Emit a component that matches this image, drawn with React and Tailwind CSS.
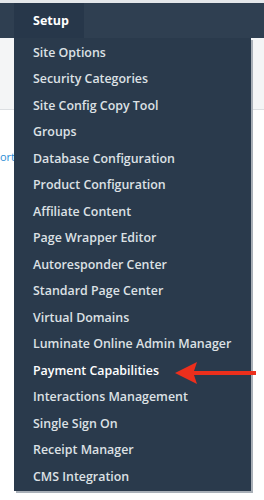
const items = [
  'Site Options',
  'Security Categories',
  'Site Config Copy Tool',
  'Groups',
  'Database Configuration',
  'Product Configuration',
  'Affiliate Content',
  'Page Wrapper Editor',
  'Autoresponder Center',
  'Standard Page Center',
  'Virtual Domains',
  'Luminate Online Admin Manager',
  'Payment Capabilities',
  'Interactions Management',
  'Single Sign On',
  'Receipt Manager',
  'CMS Integration',
];

export default function App() {
  return (
    <div className="relative w-[264px] h-[500px] overflow-hidden bg-white font-['Open_Sans',sans-serif]">
      {/* top strip + nav bar */}
      <div className="h-[3px] bg-[#e4e7ea]" />
      <div className="flex h-[35px] bg-[#2f3f51] pl-[14px]">
        <div className="flex w-[70px] items-center bg-[#27374a] pl-[19px] pt-[2px] text-[12.5px] font-bold text-white">
          Setup
        </div>
      </div>

      {/* page behind the menu */}
      <div className="h-[72px] border-b border-[#dcdfe2] bg-[#f4f5f6]" />
      <div className="pt-[40px] text-[11px] leading-[14px] text-[#2b8ed6]">ort</div>

      {/* dropdown */}
      <div className="absolute left-[14px] top-[38px] w-[237px] pt-[2px] bg-[#2a3a4c] shadow-[2px_2px_0_0_#a9b0b8]">
        {items.map((label) => (
          <div
            key={label}
            className={`flex h-[26.5px] items-center pl-[19px] text-[12.4px] font-semibold ${
              label === 'Payment Capabilities' ? 'text-white' : 'text-[#dde1e5]'
            }`}
          >
            {label}
          </div>
        ))}
      </div>

      {/* red pointer arrow */}
      <svg className="absolute left-[174px] top-[361px]" width="84" height="24" viewBox="0 0 84 24">
        <path d="M1 12 L23 1 L20 10 L82 10 L82 14 L20 14 L23 23 Z" fill="#ec2f1c" />
      </svg>
    </div>
  );
}
